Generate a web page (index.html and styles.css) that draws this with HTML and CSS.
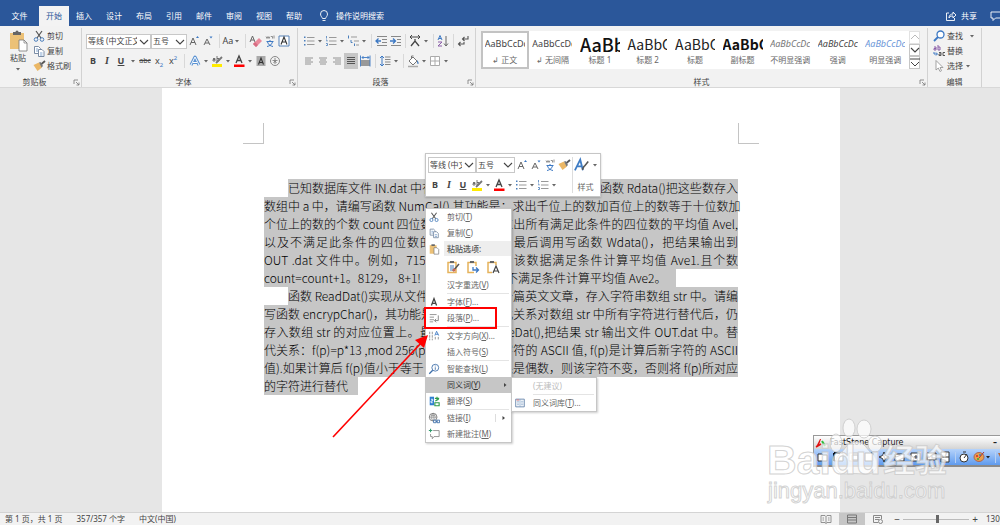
FILE: index.html
```html
<!DOCTYPE html>
<html lang="zh-CN">
<head>
<meta charset="utf-8">
<title>Word</title>
<link rel="stylesheet" href="styles.css">
</head>
<body>
<svg class="defs" aria-hidden="true">
  <symbol id="caret" viewBox="0 0 8 14"><path d="M2 6h4L4 8.500z" fill="#666"/></symbol>
  <symbol id="chev" viewBox="0 0 10 10"><path d="M1 3l4 4 4-4" fill="none" stroke="#444" stroke-width="1.100"/></symbol>
  <symbol id="launch" viewBox="0 0 7 7"><path d="M1 5V1h4M3 3l3 3M6 3.500V6H3.500" fill="none" stroke="#777" stroke-width=".8"/></symbol>
  <symbol id="paste" viewBox="0 0 20 22"><path d="M2 3h14v16H2z" fill="#ecc177"/><path d="M5 2h2.500a1.500 1.500 0 0 1 3 0H13v3H5z" fill="#666"/><path d="M11 10h5l3 3v8h-8z" fill="#fff" stroke="#777" stroke-width=".8"/><path d="M16 10v3h3" fill="none" stroke="#777" stroke-width=".7"/></symbol>
  <symbol id="cut" viewBox="0 0 14 14"><path d="M4 2l5 7M10 2L5 9" stroke="#555" stroke-width="1.200" fill="none"/><circle cx="4" cy="10.500" r="1.800" fill="none" stroke="#4a7ebb"/><circle cx="10" cy="10.500" r="1.800" fill="none" stroke="#4a7ebb"/></symbol>
  <symbol id="copy" viewBox="0 0 14 14"><path d="M2.500 2.500h4l2 2v5h-6z" fill="#fff" stroke="#7a8ca5"/><path d="M6.500 5.500h3.500l2 2v5H6.500z" fill="#fff" stroke="#7a8ca5"/><path d="M4 5h2M4 7h2M8 9h2.500M8 11h2.500" stroke="#4a7ebb" stroke-width=".7"/></symbol>
  <symbol id="brush" viewBox="0 0 14 14"><path d="M1.500 6L7 3.500l3 5L5.500 12z" fill="#ebb765"/><path d="M7 3.500L8.500 3l2.500 4-1.500 1.500z" fill="#777"/><path d="M9.500 5L13 2" stroke="#555" stroke-width="1.800"/></symbol>
  <symbol id="clip" viewBox="0 0 14 14"><path d="M2 2.500h8v10H2z" fill="#ecc177"/><path d="M4 1.500h4v2H4z" fill="#666"/><path d="M7 5.500h3.500l2 2v5.500H7z" fill="#fff" stroke="#777" stroke-width=".8"/></symbol>
  <symbol id="clipkeep" viewBox="0 0 14 14"><path d="M2 2.500h8v10H2z" fill="#fff" stroke="#e5b35c" stroke-width="1.500"/><path d="M4 1h4v2H4z" fill="#666"/><path d="M4 6h4M4 8h4M4 10h3" stroke="#4a7ebb"/><path d="M7 11l6-7" stroke="#555" stroke-width="1.500"/><circle cx="8" cy="10" r="1.500" fill="#c65"/></symbol>
  <symbol id="clipmerge" viewBox="0 0 14 14"><path d="M8 12.500H2v-10h8V6" fill="#fff" stroke="#e5b35c" stroke-width="1.500"/><path d="M4 1h4v2H4z" fill="#666"/><path d="M7 7v3h5M10 7.500l2.500 2.500-2.500 2.500" fill="none" stroke="#3c78c3" stroke-width="1.300"/></symbol>
  <symbol id="cliptext" viewBox="0 0 14 14"><path d="M6 12.500H2v-10h8V5" fill="#fff" stroke="#e5b35c" stroke-width="1.500"/><path d="M4 1h4v2H4z" fill="#666"/><path d="M7 13l3-7 3 7M8 11h4" fill="none" stroke="#444" stroke-width="1.200"/></symbol>
  <symbol id="agrow" viewBox="0 0 14 14"><path d="M3 11l3-7 3 7M4 8.500h4" fill="none" stroke="#666"/><path d="M9 4l1.500-2L12 4z" fill="#3c78c3"/></symbol>
  <symbol id="ashrink" viewBox="0 0 14 14"><path d="M3 11l3-6 3 6M4 9h4" fill="none" stroke="#666"/><path d="M8.500 2.500h3L10 4.500z" fill="#3c78c3"/></symbol>
  <symbol id="eraser" viewBox="0 0 14 14"><path d="M1 8l2.500-6L6 8M2 6h3" fill="none" stroke="#666"/><path d="M4 10l6-6 3 3-6 6z" fill="#e98a9c"/><path d="M4 10l2-2 3 3-2 2z" fill="#d66c82"/></symbol>
  <symbol id="wen" viewBox="0 0 14 14"><path d="M3 2.500l1 2 1-2 1 2 1-2M8 2.500h1.500v2M11 1.500v3" fill="none" stroke="#777" stroke-width=".8"/><path d="M3.500 7.500h7M7 6v1.500M4.500 8c1 3 3 4 5.500 4.500M9.500 8c-1 3-3 4-5.500 4.500" fill="none" stroke="#3c78c3"/></symbol>
  <symbol id="abox" viewBox="0 0 14 14"><path d="M2 2h10v10H2z" fill="#fff" stroke="#5782b8"/><path d="M4 10.500L7 3l3 7.500M5 8h4" fill="none" stroke="#333" stroke-width="1.100"/></symbol>
  <symbol id="aglow" viewBox="0 0 14 14"><path d="M3 11L7 3l4 8M5 8.500h4" fill="none" stroke="#5b93d3" stroke-width="3" stroke-linejoin="round"/><path d="M3 11L7 3l4 8M5 8.500h4" fill="none" stroke="#fff"/></symbol>
  <symbol id="hl" viewBox="0 0 14 14"><path d="M2 10h10v3H2z" fill="#ffeb00"/><path d="M3 4.500h2V7H3V5.500h2M7 2v5h2V4.500H7" fill="none" stroke="#555" stroke-width=".8"/><path d="M6 9l6-6" stroke="#777" stroke-width="1.800"/></symbol>
  <symbol id="acolor" viewBox="0 0 14 14"><path d="M2 10.500h10.500V13H2z" fill="#f00"/><path d="M4 9l3-7 3 7M5 6.500h4" fill="none" stroke="#444" stroke-width="1.300"/></symbol>
  <symbol id="ashade" viewBox="0 0 14 14"><path d="M2.500 2h9v10h-9z" fill="#aaa"/><path d="M4.500 10.500L7 4l2.500 6.500M5.500 8.500h3" fill="none" stroke="#333" stroke-width="1.100"/></symbol>
  <symbol id="circ" viewBox="0 0 14 14"><circle cx="7" cy="7" r="4.500" fill="none" stroke="#888"/><path d="M7 4v6M4.500 6.500h5M5.500 9L7 7l1.500 2" fill="none" stroke="#777" stroke-width=".8"/></symbol>
  <symbol id="bul" viewBox="0 0 14 14"><path d="M5 3.500h7.500M5 7h7.500M5 10.500h7.500" stroke="#999"/><path d="M2 2.500h1.500V4H2zM2 6h1.500v1.500H2zM2 10h1.500v1.500H2z" fill="#4a7ebb"/></symbol>
  <symbol id="num" viewBox="0 0 14 14"><path d="M5 3.500h7.500M5 7h7.500M5 10.500h7.500" stroke="#999"/><path d="M2.500 2v2.500M2 6h1v1.500M2 9.500h1.500v2H2" fill="none" stroke="#4a7ebb" stroke-width=".8"/></symbol>
  <symbol id="multi" viewBox="0 0 14 14"><path d="M5 3h6M8 7h5M10 11h3" stroke="#999"/><path d="M2.500 1.500v3M5 6v2.500h1.500M8.500 9.500V12" fill="none" stroke="#4a7ebb"/></symbol>
  <symbol id="outd" viewBox="0 0 14 14"><path d="M3 2.500h10M8 5.500h5M8 8.500h5M3 11.500h10" stroke="#888"/><path d="M7 7H2.500M4.500 4.500L2 7l2.500 2.500" fill="none" stroke="#3c78c3" stroke-width="1.300"/></symbol>
  <symbol id="ind" viewBox="0 0 14 14"><path d="M3 2.500h10M9 5.500h4M9 8.500h4M3 11.500h10" stroke="#888"/><path d="M2 7h5M5 4.500L7.500 7 5 9.500" fill="none" stroke="#3c78c3" stroke-width="1.300"/></symbol>
  <symbol id="asian" viewBox="0 0 14 14"><path d="M3 12l4-5 4 5M7 7V5" fill="none" stroke="#444" stroke-width="1.300"/><path d="M2 3h10M4 1L2 3l2 2M10 1l2 2-2 2" fill="none" stroke="#444"/></symbol>
  <symbol id="sort" viewBox="0 0 14 14"><path d="M2 6l2-4.500L6 6M3 4.500h2" fill="none" stroke="#3c78c3"/><path d="M2 8h4l-4 4h4" fill="none" stroke="#8b5fa8"/><path d="M10 2v10M8 9.500l2 2.500 2-2.500" fill="none" stroke="#666"/></symbol>
  <symbol id="pil" viewBox="0 0 14 14"><path d="M12 2v3H7M8.500 3L6.500 5l2 2M8 8v2H3M4.500 8l-2 2 2 2" fill="none" stroke="#555" stroke-width="1.100"/></symbol>
  <symbol id="al" viewBox="0 0 14 14"><path d="M3 4h8M3 6h6M3 8h8M3 10h6" stroke="#888" stroke-width=".9"/></symbol>
  <symbol id="ac" viewBox="0 0 14 14"><path d="M3 4h8M4 6h6M3 8h8M4 10h6" stroke="#888" stroke-width=".9"/></symbol>
  <symbol id="ar" viewBox="0 0 14 14"><path d="M3 4h8M5 6h6M3 8h8M5 10h6" stroke="#888" stroke-width=".9"/></symbol>
  <symbol id="aj" viewBox="0 0 14 14"><path d="M3 3.500h8M3 5.500h8M3 7.500h8M3 9.500h8" stroke="#555" stroke-width="1"/></symbol>
  <symbol id="dist" viewBox="0 0 14 14"><path d="M3 6h9v6H3z" fill="#999"/><path d="M2.500 1.500v11M12 1.500v11M4 3.500h7M5.500 2L4 3.500 5.500 5M9.500 2L11 3.500 9.500 5" fill="none" stroke="#3c78c3" stroke-width=".9"/></symbol>
  <symbol id="lh" viewBox="0 0 14 14"><path d="M7 3h5.500M7 5.500h5.500M7 8h5.500M7 10.500h5.500" stroke="#888"/><path d="M4 2v10M2 4l2-2 2 2M2 10l2 2 2-2" fill="none" stroke="#3c78c3"/></symbol>
  <symbol id="fill" viewBox="0 0 14 14"><path d="M3 7l4-4 4 4-4 4zM5.500 5V2h2" fill="#fff" stroke="#777"/><path d="M11 6c2 2 2 4 1 4s-1-2-1-4z" fill="#4a7ebb"/><path d="M2 12.500h10" stroke="#aaa" stroke-width="1.500"/></symbol>
  <symbol id="bord" viewBox="0 0 14 14"><path d="M2.500 2.500h9v9h-9zM7 2.500v9M2.500 7h9" fill="#fff" stroke="#aaa"/></symbol>
  <symbol id="find" viewBox="0 0 14 14"><circle cx="8.500" cy="5.500" r="3.500" fill="#fff" stroke="#3c78c3" stroke-width="1.300"/><path d="M6 8l-4 4" stroke="#3c78c3" stroke-width="1.800"/></symbol>
  <symbol id="smart" viewBox="0 0 14 14"><circle cx="8.500" cy="5.500" r="4" fill="#fff" stroke="#3c6da8"/><path d="M5.500 8.500l-4 4" stroke="#3c6da8" stroke-width="1.500"/><path d="M8.500 3v1M8.500 5v3" stroke="#3c6da8"/></symbol>
  <symbol id="repl" viewBox="0 0 14 14"><path d="M2 3h2v3H2V4.500h2M6 1v5h2V3H6" fill="none" stroke="#8b5fa8"/><path d="M7 8.500h2v3H7V10h2M13 8.500h-2v3h2" fill="none" stroke="#555"/><path d="M2 8v2h3M4 8.500L5.500 10 4 11.500" fill="none" stroke="#3c78c3"/></symbol>
  <symbol id="sel" viewBox="0 0 14 14"><path d="M4 1.500v9.500l2.300-2 1.700 3.500 1.500-.8L8 8.500h3z" fill="#fff" stroke="#999" stroke-width=".9"/></symbol>
  <symbol id="bigA" viewBox="0 0 20 18"><path d="M2 15L8 3l3 12M5 10.500h5" fill="none" stroke="#3f7cc4" stroke-width="2"/><path d="M10 14c2-1 1-3 3-4l4-5" fill="none" stroke="#555" stroke-width="1.800"/></symbol>
  <symbol id="fontA" viewBox="0 0 14 14"><path d="M4 11l3-8 3 8M5 8.500h4" fill="none" stroke="#444" stroke-width="1.500"/></symbol>
  <symbol id="para" viewBox="0 0 14 14"><path d="M2 3h8M2 6h5M2 9h5M2 11.500h4" stroke="#888"/><path d="M12 4v6H8M9.500 8L7.500 10l2 2" fill="none" stroke="#777"/></symbol>
  <symbol id="tdir" viewBox="0 0 14 14"><path d="M2 2v10M5 2v10M8.500 8v4M12 8v4" stroke="#888" stroke-dasharray="3 1"/><path d="M8 6.500l2-5 2.500 5M9 5h3" fill="none" stroke="#3c78c3"/></symbol>
  <symbol id="trans" viewBox="0 0 14 14"><path d="M2 2h5v10H2z" fill="#2f7fd0"/><path d="M3.500 5h2v2h-2v2h2" stroke="#fff" fill="none"/><path d="M8 4h5M10.500 2v4M8.500 7l4-2M8 9h5v3.500H8z" stroke="#2d9a49" stroke-width="1.300" fill="none"/></symbol>
  <symbol id="link" viewBox="0 0 14 14"><circle cx="6" cy="6" r="4.500" fill="none" stroke="#777"/><path d="M1.500 6h9M6 1.500v9M3 3c2 1.500 4 1.500 6 0M6 1.500c-3 3-3 6 0 9M6 1.500c3 3 3 6 0 9" fill="none" stroke="#777" stroke-width=".7"/><path d="M6.500 9.500h3v3h-3zM10.500 9.500h3v3h-3zM9 11h2" fill="#fff" stroke="#3c6da8"/></symbol>
  <symbol id="note" viewBox="0 0 14 14"><path d="M6 3h7v7H7l-2 2.500V10H3V7" fill="none" stroke="#888"/><path d="M3 1v4M1 3h4" stroke="#2d9a6b" stroke-width="1.200"/></symbol>
  <symbol id="thes" viewBox="0 0 14 14"><path d="M2 2.500h10v9H2z" fill="#fff" stroke="#5d7ea6"/><path d="M7 2.500v9M3.500 5H6M3.500 7H6M3.500 9H6M8 5h3M8 7h3M8 9h3" stroke="#7fa1c8" stroke-width=".8"/><path d="M3 3.500h3" stroke="#d66"/></symbol>
</svg>

<div class="app">
<header class="tabs">
  <nav class="tablist" aria-label="功能区">
    <button class="tab file">文件</button><button class="tab on">开始</button><button class="tab">插入</button><button class="tab">设计</button><button class="tab">布局</button><button class="tab">引用</button><button class="tab">邮件</button><button class="tab">审阅</button><button class="tab">视图</button><button class="tab">帮助</button>
  </nav>
  <button class="tell"><svg width="10" height="14" viewBox="0 0 10 14"><path d="M3.500 9.500C3 8 1.500 7 1.500 5a3.500 3.500 0 0 1 7 0c0 2-1.500 3-2 4.500zM3.500 11.500h3" fill="none" stroke="#fff" stroke-width=".9"/></svg>操作说明搜索</button>
  <button class="share"><svg width="12" height="12" viewBox="0 0 12 12"><path d="M4 3H1.500v7.500h8V8M4 8c0-3 2-4 4-4V2l3 3-3 3V6C6.500 6 5 6 4 8z" fill="none" stroke="#fff" stroke-width=".9"/></svg>共享</button>
  <button class="comment" aria-label="批注"><svg width="10" height="12" viewBox="0 0 10 12"><path d="M10 2H1v6h2v2.500L5.500 8H10" fill="none" stroke="#fff" stroke-width=".9"/></svg></button>
</header>

<section class="ribbon">
  <div class="group g-clip">
    <div class="body clip-body">
      <button class="bigpaste"><svg width="20" height="22"><use href="#paste"/></svg>粘贴<svg width="8" height="10" viewBox="0 0 8 10"><path d="M2 4h4L4 6.500z" fill="#666"/></svg></button>
      <div class="stack">
        <button class="cmd"><svg class="i"><use href="#cut"/></svg>剪切</button>
        <button class="cmd"><svg class="i"><use href="#copy"/></svg>复制</button>
        <button class="cmd"><svg class="i"><use href="#brush"/></svg>格式刷</button>
      </div>
    </div>
    <footer class="cap">剪贴板<svg class="launch"><use href="#launch"/></svg></footer>
  </div>

  <div class="group g-font">
    <div class="body rows">
      <div class="row">
        <span class="combo face"><select aria-label="字体"><option>等线 (中文正文)</option></select><svg class="chev"><use href="#chev"/></svg></span>
        <span class="combo size"><select aria-label="字号"><option>五号</option></select><svg class="chev"><use href="#chev"/></svg></span>
        <button class="t" aria-label="增大"><svg class="i"><use href="#agrow"/></svg></button>
        <button class="t" aria-label="减小"><svg class="i"><use href="#ashrink"/></svg></button>
        <i class="sep"></i>
        <button class="t aa">Aa</button><svg class="c"><use href="#caret"/></svg>
        <i class="sep"></i>
        <button class="t" aria-label="清除格式"><svg class="i"><use href="#eraser"/></svg></button>
        <button class="t" aria-label="拼音"><svg class="i"><use href="#wen"/></svg></button>
        <button class="t" aria-label="边框"><svg class="i"><use href="#abox"/></svg></button>
      </div>
      <div class="row">
        <button class="t"><b>B</b></button><button class="t serif"><i>I</i></button><button class="t"><u>U</u></button><svg class="c wide"><use href="#caret"/></svg>
        <button class="t small"><s>abc</s></button><button class="t"><span>x<sub>2</sub></span></button><button class="t"><span>x<sup>2</sup></span></button>
        <i class="sep"></i>
        <button class="t" aria-label="效果"><svg class="i"><use href="#aglow"/></svg></button><svg class="c"><use href="#caret"/></svg>
        <button class="t" aria-label="突出显示"><svg class="i"><use href="#hl"/></svg></button><svg class="c"><use href="#caret"/></svg>
        <button class="t" aria-label="颜色"><svg class="i"><use href="#acolor"/></svg></button><svg class="c"><use href="#caret"/></svg>
        <button class="t" aria-label="底纹"><svg class="i"><use href="#ashade"/></svg></button>
        <button class="t" aria-label="带圈字符"><svg class="i"><use href="#circ"/></svg></button>
      </div>
    </div>
    <footer class="cap">字体<svg class="launch"><use href="#launch"/></svg></footer>
  </div>

  <div class="group g-para">
    <div class="body rows tight">
      <div class="row">
        <button class="t" aria-label="项目符号"><svg class="i"><use href="#bul"/></svg></button><svg class="c"><use href="#caret"/></svg>
        <button class="t" aria-label="编号"><svg class="i"><use href="#num"/></svg></button><svg class="c"><use href="#caret"/></svg>
        <button class="t" aria-label="多级列表"><svg class="i"><use href="#multi"/></svg></button><svg class="c"><use href="#caret"/></svg>
        <i class="sep"></i>
        <button class="t" aria-label="减少缩进"><svg class="i"><use href="#outd"/></svg></button><button class="t" aria-label="增加缩进"><svg class="i"><use href="#ind"/></svg></button>
        <i class="sep"></i>
        <button class="t" aria-label="中文版式"><svg class="i"><use href="#asian"/></svg></button><svg class="c"><use href="#caret"/></svg>
        <i class="sep"></i>
        <button class="t" aria-label="排序"><svg class="i"><use href="#sort"/></svg></button>
        <i class="sep"></i>
        <button class="t" aria-label="编辑标记"><svg class="i"><use href="#pil"/></svg></button>
      </div>
      <div class="row">
        <button class="t" aria-label="左对齐"><svg class="i"><use href="#al"/></svg></button><button class="t" aria-label="居中"><svg class="i"><use href="#ac"/></svg></button><button class="t" aria-label="右对齐"><svg class="i"><use href="#ar"/></svg></button><button class="t pressed" aria-label="两端对齐"><svg class="i"><use href="#aj"/></svg></button><button class="t" aria-label="分散对齐"><svg class="i"><use href="#dist"/></svg></button>
        <i class="sep"></i>
        <button class="t" aria-label="行距"><svg class="i"><use href="#lh"/></svg></button><svg class="c"><use href="#caret"/></svg>
        <i class="sep"></i>
        <button class="t" aria-label="填充"><svg class="i"><use href="#fill"/></svg></button><svg class="c"><use href="#caret"/></svg>
        <button class="t" aria-label="框线"><svg class="i"><use href="#bord"/></svg></button><svg class="c"><use href="#caret"/></svg>
      </div>
    </div>
    <footer class="cap">段落<svg class="launch"><use href="#launch"/></svg></footer>
  </div>

  <div class="group g-style">
    <div class="body gallery">
      <button class="st on"><span class="pv">AaBbCcDc</span><span class="nm">↲ 正文</span></button>
      <button class="st"><span class="pv">AaBbCcDc</span><span class="nm">↲ 无间隔</span></button>
      <button class="st"><span class="pv h1">AaBb</span><span class="nm">标题 1</span></button>
      <button class="st"><span class="pv h2">AaBbC</span><span class="nm">标题 2</span></button>
      <button class="st"><span class="pv h2">AaBbC</span><span class="nm">标题</span></button>
      <button class="st"><span class="pv h3">AaBbC</span><span class="nm">副标题</span></button>
      <button class="st"><span class="pv em1">AaBbCcDc</span><span class="nm">不明显强调</span></button>
      <button class="st"><span class="pv em2">AaBbCcDc</span><span class="nm">强调</span></button>
      <button class="st"><span class="pv em3">AaBbCcDc</span><span class="nm">明显强调</span></button>
      <div class="scroll">
        <button class="off" aria-label="上"><svg width="10" height="10" viewBox="0 0 10 10"><path d="M1 7l4-4 4 4" fill="none" stroke="#bbb"/></svg></button>
        <button aria-label="下"><svg width="10" height="10"><use href="#chev"/></svg></button>
        <button aria-label="更多"><svg width="10" height="10" viewBox="0 0 10 10"><path d="M0 1h10M1 4l4 4 4-4" fill="none" stroke="#444"/></svg></button>
      </div>
    </div>
    <footer class="cap">样式<svg class="launch"><use href="#launch"/></svg></footer>
  </div>

  <div class="group g-edit">
    <div class="body stack">
      <button class="cmd"><svg class="i"><use href="#find"/></svg>查找<svg class="c gap"><use href="#caret"/></svg></button>
      <button class="cmd"><svg class="i"><use href="#repl"/></svg>替换</button>
      <button class="cmd"><svg class="i"><use href="#sel"/></svg>选择<svg class="c"><use href="#caret"/></svg></button>
    </div>
    <footer class="cap">编辑</footer>
  </div>
  <div class="rest"></div>
</section>

<main class="desk">
  <article class="page">
    <div class="marks"><i class="ml"></i><i class="mr"></i></div>
    <div class="text">
      <p class="ln first"><span class="a">已知数据库文件 IN.dat 中有</span><span class="z">读函数 Rdata()把这些数存入</span></p>
      <p class="ln whole"><span class="full">数组中 a 中，请编写函数 NumCal() 其功能是：求出千位上的数加百位上的数等于十位数加</span></p>
      <p class="ln"><span class="a">个位上的数的个数 count 四位数</span><span class="z">求出所有满足此条件的四位数的平均值 Avel,</span></p>
      <p class="ln"><span class="a">以及不满足此条件的四位数的</span><span class="z">。最后调用写函数 Wdata()，把结果输出到</span></p>
      <p class="ln"><span class="a">OUT .dat 文件中。例如，7153</span><span class="z">。该数据满足条件计算平均值 Ave1.且个数</span></p>
      <p class="ln short"><span class="a nat">count=count+1。8129， 8+1!</span><span class="z nat">不满足条件计算平均值 Ave2。</span></p>
      <p class="ln indent"><span class="a nat">函数 ReadDat()实现从文件</span><span class="z">一篇英文文章，存入字符串数组 str 中。请编</span></p>
      <p class="ln"><span class="a">写函数 encrypChar()，其功能是</span><span class="z">此关系对数组 str 中所有字符进行替代后，仍</span></p>
      <p class="ln"><span class="a">存入数组 str 的对应位置上。最</span><span class="z">iteDat(),把结果 str 输出文件 OUT.dat 中。替</span></p>
      <p class="ln"><span class="a">代关系：f(p)=p*13 ,mod 256(p 是</span><span class="z">字符的 ASCII 值, f(p)是计算后新字符的 ASCII</span></p>
      <p class="ln"><span class="a nat">值).如果计算后 f(p)值小于等于</span><span class="z">果是偶数，则该字符不变，否则将 f(p)所对应</span></p>
      <p class="ln last"><span class="nat">的字符进行替代</span></p>
    </div>
  </article>
</main>

<footer class="status">
  <span>第 1 页，共 1 页</span><span>357/357 个字</span><span>中文(中国)</span>
  <div class="views">
    <button class="v" aria-label="阅读视图"><svg width="12" height="10" viewBox="0 0 12 10"><path d="M1 1.500h4l1 1 1-1h4v7H7l-1 1-1-1H1zM6 2.500v7M2.500 4H4M2.500 6H4M8 4h1.500M8 6h1.500" fill="none" stroke="#888" stroke-width=".9"/></svg></button>
    <button class="v cur" aria-label="页面视图"><svg width="12" height="10" viewBox="0 0 12 10"><path d="M1.500 1h9v8h-9zM2 3.500h8M2 6h8" fill="none" stroke="#777"/></svg></button>
    <button class="v" aria-label="Web 版式"><svg width="12" height="10" viewBox="0 0 12 10"><path d="M6 8.500H1.500v-7h8V5M3 3.500h5M3 5.500h4" fill="none" stroke="#888"/><circle cx="8.500" cy="7.500" r="2" fill="none" stroke="#888"/></svg></button>
    <button class="step" aria-label="缩小">−</button>
    <input class="zoom" type="range" min="0" max="100" value="53" aria-label="缩放">
    <button class="step" aria-label="放大">+</button>
    <span class="pct">130%</span>
  </div>
</footer>
</div>

<div class="capture">
  <div class="cap-title"><svg width="12" height="10" viewBox="0 0 12 10"><path d="M1 9l4-8h1L4 7z" fill="#e01010"/><path d="M1 9l5-3" stroke="#e01010" stroke-width="1.500"/><path d="M7 3l3 5" stroke="#2dc03c" stroke-width="2"/></svg><span>FastStone Capture</span><b>–</b></div>
  <div class="cap-tools">
    <svg width="187" height="16" viewBox="0 0 187 16">
      <g fill="#fff" stroke="#333"><path d="M4 5h4l1 1h4v6H4z"/><path d="M20 4h9v8h-9z"/><path d="M35 4h9v8h-9zM38 6h6v5h-6z"/><path d="M51 4h8v8h-8z"/><path d="M70 3l1.500 3.500L75 8l-3.500 1.500L70 13l-1.500-3.500L65 8l3.500-1.500z"/><path d="M81 5h9v7h-9z"/><path d="M97 4h9v8h-9zM101 7h2v2h-2z"/><path d="M113 4h9v7h-9z"/><path d="M127 3h8v10h-8zM127 8h8"/></g>
      <path d="M20 4h9M20 4v8" stroke="#111" stroke-width="2"/>
      <path d="M141.500 3v11M181.500 3v11" stroke="#b7d0f3"/>
      <circle cx="150" cy="9" r="4" fill="#fff" stroke="#333"/><path d="M150 9l3-4M149 3h3" stroke="#333"/>
      <ellipse cx="165" cy="8" rx="5" ry="4.500" fill="#e9a04d" stroke="#a65"/><circle cx="163" cy="7" r="1" fill="#d22"/><circle cx="166" cy="6" r="1" fill="#28c"/><circle cx="164" cy="10" r="1" fill="#3a3"/><path d="M165 9l5-6" stroke="#a33"/>
      <path d="M172 7h4l-2 2.500z" fill="#222"/>
      <path d="M184 4h3v6z" fill="#b36a3c"/>
    </svg>
  </div>
</div>

<svg class="mark" width="184" height="98" viewBox="0 0 184 98" role="img" aria-label="Baidu 经验">
  <g class="ink">
    <path d="M90 32c9 0 11 8 17 13 7 7 4 19-6 19-8 0-14-1-22 0-11 0-12-13-6-19 6-5 8-13 17-13z"/>
    <ellipse cx="70" cy="33" rx="6" ry="9"/><ellipse cx="83" cy="18" rx="6" ry="9"/><ellipse cx="98" cy="19" rx="7" ry="9"/><ellipse cx="109" cy="34" rx="7" ry="8"/>
    <text class="big" x="1" y="64">Baidu</text>
    <text class="han" x="117" y="62">经验</text>
    <text class="url" x="2" y="88">jingyan.baidu.com</text>
  </g>
</svg>

<div class="mini">
  <div class="mrows">
    <div class="row">
      <span class="combo mface"><select aria-label="字体"><option>等线 (中文正文)</option></select><svg class="chev"><use href="#chev"/></svg></span>
      <span class="combo msize"><select aria-label="字号"><option>五号</option></select><svg class="chev"><use href="#chev"/></svg></span>
      <button class="t" aria-label="增大"><svg class="i"><use href="#agrow"/></svg></button><button class="t" aria-label="减小"><svg class="i"><use href="#ashrink"/></svg></button><button class="t" aria-label="拼音"><svg class="i"><use href="#wen"/></svg></button><button class="t" aria-label="格式刷"><svg class="i"><use href="#brush"/></svg></button>
    </div>
    <div class="row">
      <button class="t"><b>B</b></button><button class="t serif"><i>I</i></button><button class="t"><u>U</u></button>
      <button class="t" aria-label="突出显示"><svg class="i"><use href="#hl"/></svg></button><svg class="c"><use href="#caret"/></svg>
      <button class="t" aria-label="颜色"><svg class="i"><use href="#acolor"/></svg></button><svg class="c"><use href="#caret"/></svg>
      <button class="t" aria-label="项目符号"><svg class="i"><use href="#bul"/></svg></button><svg class="c"><use href="#caret"/></svg>
      <button class="t" aria-label="编号"><svg class="i"><use href="#num"/></svg></button><svg class="c"><use href="#caret"/></svg>
    </div>
  </div>
  <button class="mstyle"><span><svg width="18" height="16"><use href="#bigA"/></svg><svg class="c"><use href="#caret"/></svg></span>样式</button>
</div>

<div class="menu ctx" role="menu">
  <button class="mi"><svg class="i"><use href="#cut"/></svg><span>剪切(<u>T</u>)</span></button>
  <button class="mi"><svg class="i"><use href="#copy"/></svg><span>复制(<u>C</u>)</span></button>
  <div class="mi head"><svg class="i"><use href="#clip"/></svg><span>粘贴选项:</span></div>
  <div class="opts"><button aria-label="保留源格式"><svg class="i"><use href="#clipkeep"/></svg></button><button aria-label="合并格式"><svg class="i"><use href="#clipmerge"/></svg></button><button aria-label="只保留文本"><svg class="i"><use href="#cliptext"/></svg></button></div>
  <button class="mi"><i></i><span>汉字重选(<u>V</u>)</span></button>
  <hr>
  <button class="mi"><svg class="i"><use href="#fontA"/></svg><span>字体(<u>F</u>)...</span></button>
  <button class="mi"><svg class="i"><use href="#para"/></svg><span>段落(<u>P</u>)...</span></button>
  <hr class="thick">
  <button class="mi"><svg class="i"><use href="#tdir"/></svg><span>文字方向(<u>X</u>)...</span></button>
  <button class="mi"><i></i><span>插入符号(<u>S</u>)</span></button>
  <hr>
  <button class="mi"><svg class="i"><use href="#smart"/></svg><span>智能查找(<u>L</u>)</span></button>
  <button class="mi hot"><i></i><span>同义词(<u>Y</u>)</span><svg class="arr" viewBox="0 0 6 8"><path d="M2 2l2.500 2L2 6z"/></svg></button>
  <button class="mi"><svg class="i"><use href="#trans"/></svg><span>翻译(<u>S</u>)</span></button>
  <hr>
  <button class="mi"><svg class="i"><use href="#link"/></svg><span>链接(<u>I</u>)</span><svg class="arr split" viewBox="0 0 6 8"><path d="M2 2l2.500 2L2 6z"/></svg></button>
  <button class="mi"><svg class="i"><use href="#note"/></svg><span>新建批注(<u>M</u>)</span></button>
</div>

<div class="menu sub" role="menu">
  <button class="mi dim" disabled><i></i><span>(无建议)</span></button>
  <hr>
  <button class="mi"><svg class="i"><use href="#thes"/></svg><span>同义词库(<u>T</u>)...</span></button>
</div>

<div class="redbox"></div>
<svg class="arrow" width="100" height="106" viewBox="0 0 100 106"><path d="M2 104L91 9" stroke="#f00" stroke-width="1.600"/><path d="M97 2l-4 13-9-8z" fill="#f00"/></svg>
</body>
</html>
```

FILE: styles.css
```css
* { box-sizing: border-box; }
html, body { height: 100%; }
body {
  margin: 0;
  overflow: hidden;
  font: 8px/12px "Noto Sans", "Noto Sans CJK SC", sans-serif;
  color: #444;
}
button {
  margin: 0; padding: 0; border: 0; background: none;
  font: inherit; color: inherit; white-space: nowrap;
}
p { margin: 0; }
svg { flex: none; display: block; }
.defs { display: none; }
.i { width: 14px; height: 14px; }
.c { width: 8px; height: 14px; }
.c.wide { width: 10px; }

.app { height: 100%; display: flex; flex-direction: column; }

/* title tabs */
.tabs { flex: none; display: flex; align-items: stretch; height: 26px; padding-top: 6px; background: #2b579a; color: #fff; }
.tablist { display: flex; }
.tab { width: 30px; }
.tab.file { width: 39px; }
.tab.on { background: #f3f3f3; color: #2b579a; }
.tell, .share { display: flex; align-items: center; gap: 7px; }
.tell { margin-left: 10px; }
.share { margin-left: auto; gap: 4px; }
.comment { margin-left: 13px; display: flex; align-items: center; }

/* ribbon */
.ribbon { flex: none; display: flex; height: 62px; padding-top: 2px; background: #f2f2f2; border-bottom: 1px solid #d8d8d8; }
.group { display: flex; flex-direction: column; justify-content: space-between; border-right: 1px solid #d2d2d2; }
.g-clip { width: 82px; }
.g-font { width: 216px; }
.g-para { width: 178px; }
.g-style { flex: 1; min-width: 0; }
.g-edit { width: 54px; }
.rest { width: 18px; }
.cap { position: relative; text-align: center; height: 10px; line-height: 10px; padding-right: 12px; }
.g-style .cap, .g-edit .cap { padding-right: 0; }
.launch { position: absolute; right: 1px; bottom: 1px; width: 7px; height: 7px; }
.clip-body { display: flex; padding-left: 8px; gap: 4px; }
.bigpaste { display: flex; flex-direction: column; align-items: center; width: 20px; padding-top: 2px; }
.stack { display: flex; flex-direction: column; }
.cmd { display: flex; align-items: center; gap: 1px; height: 15px; }
.cmd .gap { margin-left: 4px; }
.g-edit .stack { padding-left: 4px; }
.rows { display: flex; flex-direction: column; gap: 4px; padding: 5px 0 0 4px; }
.row { display: flex; align-items: center; height: 16px; }
.t { width: 14px; height: 16px; display: flex; align-items: center; justify-content: center; font-size: 9px; }
.t b, .t u { font-weight: 700; }
.t sub, .t sup { font-size: 6px; line-height: 0; color: #3c78c3; }
.t.aa { width: 10px; }
.t.small { font-size: 7px; }
.t.serif { font-family: "Liberation Serif", serif; font-size: 10px; font-weight: 700; }
.t.pressed { background: #c6c6c6; }
.sep { width: 8px; height: 14px; flex: none; background: linear-gradient(#d8d8d8, #d8d8d8) center / 1px 100% no-repeat; }
.tight .sep { width: 6px; }
.combo { position: relative; height: 15px; }
.combo select {
  display: block; width: 100%; height: 100%; margin: 0; padding: 0 13px 0 1px;
  appearance: none; border: 1px solid #c8c8c8; border-radius: 0; background: #fff;
  font: inherit; color: #444; overflow: hidden; text-overflow: clip;
}
.chev { position: absolute; right: 2px; top: 3px; width: 10px; height: 10px; pointer-events: none; }
.face { width: 65px; }
.size { width: 36px; }

.gallery { display: flex; margin: 3px 7px 0 5px; background: #fff; }
.st { flex: 1; min-width: 0; height: 38px; padding: 1px 2px; display: flex; flex-direction: column; justify-content: space-between; align-items: center; border: 2px solid transparent; color: #666; }
.st.on { border-color: #c3c3c3; }
.pv { width: 40px; height: 20px; line-height: 20px; overflow: hidden; text-align: left; font-size: 9px; color: #444; }
.pv.h1 { font-size: 18px; font-weight: 500; color: #111; font-family: "Noto Sans CJK SC", sans-serif; }
.pv.h2 { font-size: 14px; color: #222; font-family: "Noto Sans CJK SC", sans-serif; }
.pv.h3 { font-size: 14px; font-weight: 700; color: #111; font-family: "Noto Sans CJK SC", sans-serif; }
.em1, .em2, .em3 { font-style: italic; }
.pv.em1 { color: #777; }
.pv.em3 { color: #6b96d8; }
.scroll { width: 11px; display: flex; flex-direction: column; }
.scroll button { flex: 1; border: 1px solid #c6c6c6; display: flex; align-items: center; justify-content: center; }
.scroll .off { border-color: #e2e2e2; }

/* document */
.desk { flex: 1; min-height: 0; background: #e6e6e6; display: flex; justify-content: center; }
.page { width: calc(68% - 2px); margin-left: 2px; padding: 35px 102px 0; background: #fff; }
.marks { display: flex; justify-content: space-between; height: 21px; margin: 0 -21px 35px; }
.marks i { width: 21px; border-bottom: 1px solid #c4c4c4; }
.ml { border-right: 1px solid #c4c4c4; }
.mr { border-left: 1px solid #c4c4c4; }
.text { color: #000; font: 300 12px/18px "Noto Sans CJK SC", sans-serif; }
.ln { display: flex; justify-content: space-between; height: 18px; background: #c6c6c6; white-space: nowrap; }
.ln span { text-align: justify; text-align-last: justify; }
.ln .nat { text-align-last: left; }
.a { width: 168px; }
.z { width: 237px; }
.full { width: 100%; }
.first, .indent { margin-left: 24px; }
.first .a { width: 146px; }
.first .z { width: 150px; }
.indent .a { width: 144px; }
.short { margin-right: 62px; }
.short .z { width: 170px; }
.last { width: 94px; }

/* status bar */
.status { flex: none; display: flex; align-items: center; gap: 14px; height: 13px; padding-left: 5px; background: #f2f2f2; border-top: 1px solid #d4d4d4; overflow: hidden; }
.views { margin-left: auto; display: flex; align-items: center; height: 12px; }
.v { width: 26px; height: 12px; display: flex; align-items: center; justify-content: center; }
.v.cur { background: #c6c6c6; }
.step { width: 12px; font-size: 10px; }
.zoom { width: 66px; height: 12px; margin: 0; appearance: none; background: linear-gradient(#bbb, #bbb) center / 100% 1px no-repeat; }
.zoom::-webkit-slider-thumb { appearance: none; width: 3px; height: 8px; background: #666; }
.pct { width: 19px; padding-left: 5px; overflow: hidden; }

/* floating panels */
.mini { position: absolute; left: 425px; top: 153px; width: 176px; height: 44px; display: flex; padding: 3px 2px; background: #fff; border: 1px solid #c6c6c6; box-shadow: 0 1px 2px #0003; }
.mrows { display: flex; flex-direction: column; gap: 4px; width: 145px; flex: none; border-right: 1px solid #ddd; }
.mface { width: 48px; }
.msize { width: 39px; }
.mini .combo { height: 16px; }
.mini .row .t { flex: none; }
.mstyle { flex: 1; min-width: 0; display: flex; flex-direction: column; align-items: center; justify-content: space-between; color: #666; }
.mstyle span { display: flex; align-items: center; }

.menu { position: absolute; background: #fff; border: 1px solid #c6c6c6; box-shadow: 1px 1px 2px #0003; color: #666; }
.ctx { left: 425px; top: 208px; width: 87px; }
.sub { left: 511px; top: 377px; width: 86px; }
.mi { display: grid; grid-template-columns: 18px 1fr auto; align-items: center; width: 100%; height: 16px; text-align: left; }
.mi .i { width: 12px; height: 12px; margin-left: 2px; }
.mi > span { padding-left: 3px; }
.head { height: 15px; }
.head > span { background: #eee; line-height: 15px; font-weight: 500; color: #555; }
.hot { background: #c6c6c6; color: #333; }
.opts { display: flex; gap: 6px; height: 21px; align-items: center; padding-left: 20px; }
.arr { width: 12px; height: 8px; fill: #444; }
.split { width: 16px; border-left: 1px solid #ddd; }
.menu hr { margin: 0 2px 0 21px; border: 0; height: 1px; background: #e4e4e4; }
.menu hr.thick { height: 2px; border-bottom: 1px solid #fff; }
.menu .dim { color: #bbb; }

.redbox { position: absolute; left: 424px; top: 307px; width: 73px; height: 22px; border: 2px solid #f00; }
.arrow { position: absolute; left: 331px; top: 333px; }

.capture { position: absolute; right: 0; top: 435px; width: 187px; border: 1px solid #999; border-right: 0; border-bottom: 2px solid #8a8a8a; }
.cap-title { display: flex; align-items: center; gap: 3px; height: 13px; padding: 0 3px 0 1px; background: linear-gradient(#fff, #d4d4d4); font-family: "DejaVu Sans", sans-serif; color: #222; }
.cap-title b { margin-left: auto; }
.cap-tools { height: 16px; overflow: hidden; background: linear-gradient(#b5d3fb, #5f9bee); }

.mark { position: absolute; left: 766px; top: 410px; }
.ink { fill: #fff; fill-opacity: .7; stroke: #c8c8c8; stroke-opacity: .8; stroke-width: 1; font-family: "Liberation Sans", "Noto Sans CJK SC", sans-serif; }
.big { font-size: 41px; font-weight: 700; }
.han { font-size: 32px; font-weight: 700; }
.url { font-size: 22px; }
```
